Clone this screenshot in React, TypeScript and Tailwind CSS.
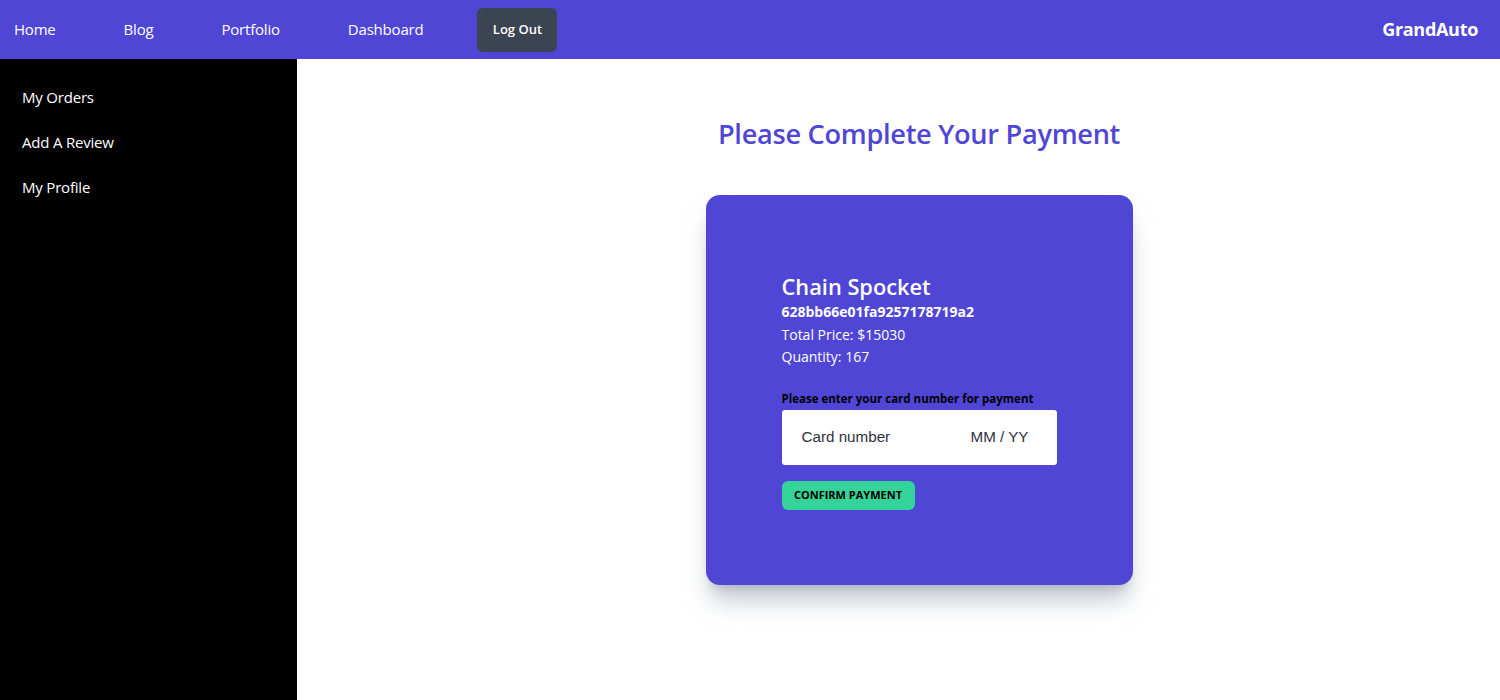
import React from 'react';

const navLinks = ['Home', 'Blog', 'Portfolio', 'Dashboard'];
const sideLinks = ['My Orders', 'Add A Review', 'My Profile'];

const App: React.FC = () => {
  return (
    <div className="min-h-screen flex flex-col bg-white font-['Open_Sans',_sans-serif]">
      <nav className="h-[59px] bg-[#4f46d6] flex items-center justify-between text-white">
        <div className="flex items-center gap-[40px]">
          {navLinks.map((l) => (
            <a key={l} className="px-[14px] text-[15px] tracking-[-0.2px]">
              {l}
            </a>
          ))}
          <button className="h-[44px] w-[80px] rounded-md bg-[#3d4451] text-[13px] font-semibold">
            Log Out
          </button>
        </div>
        <div className="pr-[22px] text-[18px] font-bold tracking-[-0.3px]">GrandAuto</div>
      </nav>

      <div className="flex flex-1 h-[641px]">
        <aside className="w-[297px] bg-black text-white pt-[27px] flex flex-col gap-[23px]">
          {sideLinks.map((l) => (
            <a key={l} className="px-[22px] text-[15px] leading-[22px] tracking-[-0.2px]">
              {l}
            </a>
          ))}
        </aside>

        <main className="flex-1 pl-[41px] flex flex-col items-center">
          <h1 className="mt-[55px] text-[27.2px] font-semibold text-[#4f46d6] tracking-[-0.3px] leading-[40px]">
            Please Complete Your Payment
          </h1>
          <div className="mt-[41px] w-[427px] h-[390px] rounded-[14px] bg-[#4f46d6] shadow-xl shadow-gray-400/60 flex flex-col px-[76px] pt-[78px]">
            <h2 className="text-white text-[21.8px] font-semibold leading-[28px]">Chain Spocket</h2>
            <p className="text-white text-[14px] font-bold leading-[22px]">628bb66e01fa9257178719a2</p>
            <p className="text-white text-[14px] leading-[23px]">Total Price: $15030</p>
            <p className="text-white text-[14px] leading-[22px]">Quantity: 167</p>
            <p className="mt-[23px] text-black text-[11.5px] font-bold leading-[16px]">
              Please enter your card number for payment
            </p>
            <div className="mt-[3px] w-[275px] h-[55px] bg-white rounded-[3px] flex items-center justify-between px-[20px] font-['Liberation_Sans',_sans-serif] text-[15.2px] text-[#30313d]">
              <span>Card number</span>
              <span className="pr-[8px]">MM / YY</span>
            </div>
            <button className="mt-[16px] w-[133px] h-[29px] rounded-md bg-[#34d399] text-black text-[11px] font-bold uppercase">
              Confirm Payment
            </button>
          </div>
        </main>
      </div>
    </div>
  );
};

export default App;
